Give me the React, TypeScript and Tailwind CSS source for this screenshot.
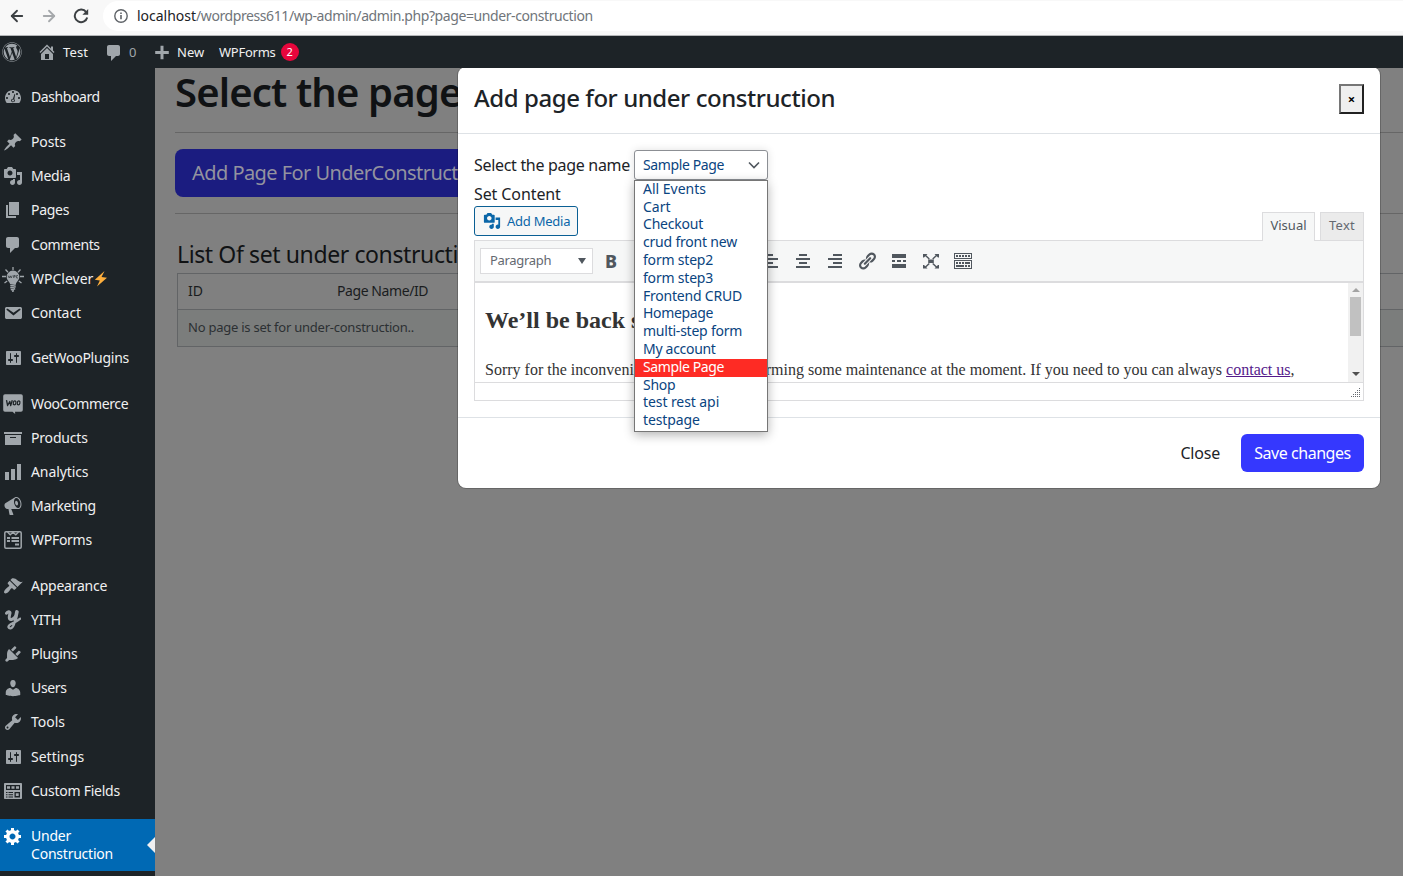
import type { ReactNode } from "react";
import { FaWordpress } from "react-icons/fa";
import { ArrowLeft, ArrowRight, Italic, List, ListOrdered, Quote } from "lucide-react";

const paths = {
  dashboard:
    "M3.76 16h12.48c1.1-1.37 1.76-3.11 1.76-5 0-4.42-3.58-8-8-8s-8 3.58-8 8c0 1.89.66 3.63 1.76 5zM10 4c.55 0 1 .45 1 1s-.45 1-1 1-1-.45-1-1 .45-1 1-1zM6 6c.55 0 1 .45 1 1s-.45 1-1 1-1-.45-1-1 .45-1 1-1zm8 0c.55 0 1 .45 1 1s-.45 1-1 1-1-.45-1-1 .45-1 1-1zm-2.4.8l.6.4-.9 5.1c.4.4.6.8.6 1.3 0 1-.9 1.7-1.9 1.7s-1.9-.8-1.9-1.8.8-1.8 1.8-1.8zM4 10c.55 0 1 .45 1 1s-.45 1-1 1-1-.45-1-1 .45-1 1-1zm12 0c.55 0 1 .45 1 1s-.45 1-1 1-1-.45-1-1 .45-1 1-1zm-5 3.5c0-.55-.45-1-1-1s-1 .45-1 1 .45 1 1 1 1-.45 1-1z",
  post: "M10.44 3.02l1.82-1.82 6.36 6.35-1.83 1.82c-1.05-.68-2.48-.57-3.41.36l-.75.75c-.92.93-1.04 2.35-.35 3.41l-1.83 1.82-2.41-2.41-2.8 2.79c-.42.42-3.38 2.71-3.8 2.29s1.86-3.39 2.28-3.81l2.79-2.79L4.1 9.36l1.83-1.82c1.05.69 2.48.57 3.4-.36l.75-.75c.93-.92 1.05-2.35.36-3.41z",
  media:
    "M13 11V4c0-.55-.45-1-1-1h-1.67L9 1H5L3.67 3H2c-.55 0-1 .45-1 1v7c0 .55.45 1 1 1h10c.55 0 1-.45 1-1zM7 4.5c1.38 0 2.5 1.12 2.5 2.5S8.38 9.5 7 9.5 4.5 8.38 4.5 7 5.62 4.5 7 4.5zM14 6h5v10.5c0 1.38-1.12 2.5-2.5 2.5S14 17.88 14 16.5s1.12-2.5 2.5-2.5c.17 0 .34.02.5.05V9h-3V6zm-4 8.05V13h2v3.5c0 1.38-1.12 2.5-2.5 2.5S7 17.88 7 16.5 8.12 14 9.5 14c.17 0 .34.02.5.05z",
  page: "M6 15V2h10v13H6zm-1 1h8v2H3V5h2v11z",
  comment: "M5 2h9c1.1 0 2 .9 2 2v7c0 1.1-.9 2-2 2h-2l-5 5v-5H5c-1.1 0-2-.9-2-2V4c0-1.1.9-2 2-2z",
  email:
    "M3.87 4h13.25C18.37 4 19 4.59 19 5.79v8.42c0 1.19-.63 1.79-1.88 1.79H3.87c-1.25 0-1.88-.6-1.88-1.79V5.79c0-1.2.63-1.79 1.88-1.79zm6.62 8.6l6.74-5.53c.24-.2.43-.66.13-1.07-.29-.41-.82-.42-1.17-.17l-5.7 3.86L4.8 5.83c-.35-.25-.88-.24-1.17.17-.3.41-.11.87.13 1.07z",
  settings:
    "M18 16V4c0-.55-.45-1-1-1H4c-.55 0-1 .45-1 1v12c0 .55.45 1 1 1h13c.55 0 1-.45 1-1zM8 11h1c.55 0 1 .45 1 1s-.45 1-1 1H8v1.5c0 .28-.22.5-.5.5s-.5-.22-.5-.5V13H6c-.55 0-1-.45-1-1s.45-1 1-1h1V5.5c0-.28.22-.5.5-.5s.5.22.5.5V11zm5-2h-1c-.55 0-1-.45-1-1s.45-1 1-1h1V5.5c0-.28.22-.5.5-.5s.5.22.5.5V7h1c.55 0 1 .45 1 1s-.45 1-1 1h-1v5.5c0 .28-.22.5-.5.5s-.5-.22-.5-.5V9z",
  archive: "M19 4v2H1V4h18zM2 7h16v10H2V7zm11 3V9H7v1h6z",
  chart: "M18 18V2h-4v16h4zm-6 0V7H8v11h4zm-6 0v-8H2v8h4z",
  megaphone:
    "M18.15 5.94c.46 1.62.38 3.22-.02 4.48-.42 1.28-1.26 2.18-2.3 2.48-.16.06-.26.06-.4.06-.06.02-.12.02-.18.02-.06.02-.14.02-.22.02h-6.8l2.22 5.5c.02.14-.06.26-.14.34-.08.1-.24.16-.34.16H6.95c-.1 0-.26-.06-.34-.16-.08-.08-.16-.2-.14-.34l-1-5.5H4.25l-.02-.02c-.5.06-1.08-.18-1.54-.62s-.88-1.08-1.06-1.88c-.24-.8-.2-1.56-.02-2.2.18-.62.58-1.08 1.06-1.3l.02-.02 9-5.4c.1-.06.18-.1.24-.16.06-.04.14-.08.24-.12.16-.08.28-.12.5-.18 1.04-.3 2.24.1 3.22.98s1.84 2.24 2.26 3.86zm-2.58 5.98h-.02c.4-.1.74-.34 1.04-.7.58-.7.86-1.76.86-3.04 0-.64-.1-1.3-.28-1.98-.34-1.36-1.02-2.5-1.78-3.24s-1.68-1.1-2.46-.88c-.82.22-1.4.96-1.7 2-.32 1.04-.28 2.36.06 3.72.38 1.36 1 2.5 1.8 3.24.78.74 1.62 1.1 2.48.88zm-2.54-7.08c.22-.04.42-.02.62.04.38.16.76.48 1.02 1s.42 1.2.42 1.78c0 .3-.04.56-.12.8-.18.48-.44.84-.86.94-.34.1-.8-.06-1.14-.4s-.64-.86-.78-1.5c-.18-.62-.12-1.24.02-1.72s.48-.84.82-.94z",
  appearance:
    "M14.48 11.06L7.41 3.99l1.5-1.5c.5-.56 2.3-.47 3.51.32 1.21.8 1.43 1.28 2.91 2.1 1.18.64 2.45 1.26 4.45.85zm-.71.71L6.7 4.7 4.93 6.47c-.39.39-.39 1.02 0 1.41l1.06 1.06c.39.39.39 1.03 0 1.42-.6.6-1.43 1.11-2.21 1.69-.35.26-.7.53-1.01.84C1.43 14.23.4 16.08 1.4 17.07c.99 1 2.84-.03 4.18-1.36.31-.31.58-.66.85-1.02.57-.78 1.08-1.61 1.69-2.21.39-.39 1.02-.39 1.41 0l1.06 1.06c.39.39 1.02.39 1.41 0z",
  plugins:
    "M13.11 4.36L9.87 7.6 8 5.73l3.24-3.24c.35-.34 1.05-.2 1.56.32.52.51.66 1.21.31 1.55zm-8 1.77l.91-1.12 9.01 9.01-1.19.84c-.71.71-2.63 1.16-3.82 1.16H6.14L4.9 17.26c-.59.59-1.54.59-2.12 0-.59-.58-.59-1.53 0-2.12l1.24-1.24v-3.88c0-1.13.4-3.19 1.09-3.89zm7.26 3.97l3.24-3.24c.34-.35 1.04-.21 1.55.31.52.51.66 1.21.31 1.55l-3.24 3.25z",
  users:
    "M10 9.25c-2.27 0-2.73-3.44-2.73-3.44C7 4.02 7.82 2 9.97 2c2.16 0 2.98 2.02 2.71 3.81 0 0-.41 3.44-2.68 3.44zm0 2.57L12.72 10c2.39 0 4.52 2.33 4.52 4.53v2.49s-3.65 1.13-7.24 1.13c-3.65 0-7.24-1.13-7.24-1.13v-2.49c0-2.25 1.94-4.48 4.47-4.48z",
  tools:
    "M16.68 9.77c-1.34 1.34-3.3 1.67-4.95.99l-5.41 6.52c-.99.99-2.59.99-3.58 0s-.99-2.59 0-3.57l6.52-5.42c-.68-1.65-.35-3.61.99-4.95 1.28-1.28 3.12-1.62 4.72-1.06l-2.89 2.89 2.82 2.82 2.86-2.87c.53 1.58.18 3.39-1.08 4.65zM3.81 16.21c.4.39 1.04.39 1.43 0 .4-.4.4-1.04 0-1.43-.39-.4-1.03-.4-1.43 0-.39.39-.39 1.03 0 1.43z",
  fields:
    "M2 2h16c.55 0 1 .45 1 1v14c0 .55-.45 1-1 1H2c-.55 0-1-.45-1-1V3c0-.55.45-1 1-1zM3 4v5h14V4zM4 5.300h3v2.400H4zm4.500 0h3v2.400h-3zm4.500 0h3v2.400h-3zM3 11v1h1.500v-1zm2.500 0v1H10v-1zM3 13.200v1h1.500v-1zm2.500 0v1H10v-1zM3 15.400v1h1.500v-1zm2.500 0v1H10v-1zM11.500 11v5.400H17V11zm1.300 1.300h2.900v2.800h-2.900z",
  gear: "M18 12h-2.18c-.17.7-.44 1.35-.81 1.93l1.54 1.54-2.1 2.1-1.54-1.54c-.58.36-1.23.63-1.91.79V19H8v-2.18c-.68-.16-1.33-.43-1.91-.79l-1.54 1.54-2.12-2.12 1.54-1.54c-.36-.58-.63-1.23-.79-1.91H1V9.03h2.17c.16-.7.44-1.35.8-1.94L2.43 5.55l2.1-2.1 1.54 1.54c.58-.37 1.24-.64 1.93-.81V2h3v2.18c.68.16 1.33.43 1.91.79l1.54-1.54 2.12 2.12-1.54 1.54c.36.59.64 1.24.8 1.94H18V12zm-8.5 1.5c1.66 0 3-1.34 3-3s-1.34-3-3-3-3 1.34-3 3 1.34 3 3 3z",
  home: "M16 8.5l1.53 1.53-1.06 1.06L10 4.6l-6.47 6.49-1.06-1.06L10 2.5l4 4v-2h2v4zm-6-2.46l6 5.99V18H4v-5.97zM12 17v-5H8v5h4z",
  plus: "M16.800 9v3h-5.300v5.300h-3V12H3.200V9h5.300V3.700h3V9z",
  alignLeft: "M12 5V3H3v2h9zm5 4V7H3v2h14zm-5 4v-2H3v2h9zm5 4v-2H3v2h14z",
  alignCenter: "M14 5V3H6v2h8zm3 4V7H3v2h14zm-3 4v-2H6v2h8zm3 4v-2H3v2h14z",
  alignRight: "M17 5V3H8v2h9zm0 4V7H3v2h14zm0 4v-2H8v2h9zm0 4v-2H3v2h14z",
  link: "M17.74 2.76c1.68 1.69 1.68 4.41 0 6.1l-1.53 1.52c-1.12 1.12-2.7 1.47-4.14 1.09l2.62-2.61.76-.77.76-.76c.84-.84.84-2.2 0-3.04-.84-.85-2.2-.85-3.04 0l-.77.76-3.38 3.38c-.37-1.44-.02-3.02 1.1-4.14l1.52-1.53c1.69-1.68 4.42-1.68 6.1 0zM8.59 13.43l5.34-5.34c.42-.42.42-1.1 0-1.52-.44-.43-1.13-.39-1.53 0l-5.33 5.34c-.42.42-.42 1.1 0 1.52.44.43 1.13.39 1.52 0zm-.76 2.29l4.14-4.15c.38 1.44.03 3.02-1.09 4.14l-1.52 1.53c-1.69 1.68-4.41 1.68-6.1 0-1.68-1.68-1.68-4.42 0-6.1l1.53-1.52c1.12-1.12 2.7-1.47 4.14-1.1l-4.14 4.15c-.85.84-.85 2.2 0 3.05.84.84 2.2.84 3.04 0z",
  more: "M17 7V3H3v4h14zM6 11V9H3v2h3zm6 0V9H8v2h4zm5 0V9h-3v2h3zm0 6v-4H3v4h14z",
  fullscreen:
    "M7.200 8.500h5.600v3.500H7.200zM2 3h4.500L5.300 4.300l3.500 3.200-1 1-3.500-3.300L3 6.500H2zm16 0v3.500h-1l-1.300-1.300-3.500 3.300-1-1 3.500-3.200L13.500 3zM2 17.500V14h1l1.300 1.300L7.800 12l1 1-3.500 3.200 1.200 1.300zm16 0h-4.500l1.200-1.300-3.500-3.200 1-1 3.500 3.300L17 14h1z",
  kitchenSink:
    "M19 2v6H1V2h18zm-1 5V3H2v4h16zM5 4v2H3V4h2zm3 0v2H6V4h2zm3 0v2H9V4h2zm3 0v2h-2V4h2zm3 0v2h-2V4h2zm2 5v9H1V9h18zm-1 8v-7H2v7h16zM5 11v2H3v-2h2zm3 0v2H6v-2h2zm3 0v2H9v-2h2zm6 0v2h-5v-2h5zm-6 3v2H3v-2h8zm3 0v2h-2v-2h2zm3 0v2h-2v-2h2z",
};

type IconName = keyof typeof paths;

function Icon({ name, className = "size-5" }: { name: IconName; className?: string }) {
  return (
    <svg viewBox="0 0 20 20" className={`shrink-0 ${className}`} fill="currentColor" fillRule="evenodd">
      <path d={paths[name]} />
    </svg>
  );
}

function BulbIcon() {
  return (
    <svg viewBox="0 0 24 26" className="h-[26px] w-6 shrink-0" fill="none" stroke="currentColor">
      <path d="M12 1v3M4.500 3.500l2.500 2.700M19.500 3.500 17 6.200M1 10.500h4M19 10.500h4M3.500 17l2.700-2M20.500 17l-2.700-2" strokeWidth="1.300" />
      <path d="M12 4.500a6.300 6.300 0 0 0-6.300 6.500c0 3.500 3 4.500 3.400 7.300h5.800c.4-2.800 3.400-3.800 3.400-7.300A6.300 6.300 0 0 0 12 4.500z" fill="currentColor" stroke="none" />
      <path d="M7 9.500l1.200 2.500 1-2.200 1 2.200 1-2.500M12.700 12V9.500h1.500v1.300h-1.500M17 9.500h-1.400V12H17" stroke="#1d2327" strokeWidth=".6" />
      <path d="M9.300 19.700l5.400-1M9.300 21.700l5.400-1M9.800 23.700l4.400-1M11 25.200l2-.5" strokeWidth="1.400" />
    </svg>
  );
}

function WooIcon() {
  return (
    <svg viewBox="0 0 20 20" className="size-5 shrink-0">
      <path d="M2 .2h16A1.800 1.800 0 0 1 19.800 2v14a1.800 1.800 0 0 1-1.800 1.800h-6l.2 2.200-2.700-2.200H2A1.800 1.800 0 0 1 .2 16V2A1.800 1.800 0 0 1 2 .2z" fill="currentColor" />
      <path d="M3.500 6.200l1.100 5.300 2.200-4 .9 4 1.600-5.300" fill="none" stroke="#1d2327" strokeWidth="1.300" strokeLinejoin="round" />
      <ellipse cx="11.600" cy="8.800" rx="1.300" ry="2" fill="none" stroke="#1d2327" strokeWidth="1.200" transform="rotate(12 11.600 8.800)" />
      <ellipse cx="15.600" cy="8.800" rx="1.300" ry="2" fill="none" stroke="#1d2327" strokeWidth="1.200" transform="rotate(12 15.600 8.800)" />
    </svg>
  );
}

function FormIcon() {
  return (
    <svg viewBox="0 0 18 18" className="size-[18px] shrink-0" fill="none" stroke="currentColor">
      <rect x=".8" y=".8" width="16.400" height="16.400" rx="1.200" strokeWidth="1.500" />
      <path d="M3.500 1l2.700 2.700L9 1.200l2.800 2.500L14.500 1" strokeWidth="1.400" />
      <path d="M3 7h3M7.500 7H15M3 10h3M7.500 10H15M11 13.500h4" strokeWidth="1.800" />
    </svg>
  );
}

function YithIcon() {
  return (
    <svg viewBox="0 0 16 20" className="h-5 w-4 shrink-0" fill="none" stroke="currentColor" strokeLinecap="round" strokeLinejoin="round">
      <path d="M1.500 3.200C2.500 1.500 5.200 1.200 5 3c-.2 1.700-1.500 4.500-.3 6 1.100 1.300 4-.2 5.600-2.500" strokeWidth="3" />
      <path d="M12 1.800c-.7 4-1.300 7.700-2.600 11.400-.9 3-2.100 5-3.900 5.200-2 .2-2.700-1.700-1.200-3.100 2-1.900 7.200-3.300 11-6.600" strokeWidth="2.300" />
      <path d="M11.900 1.900l-1.700 8" strokeWidth="3.600" />
    </svg>
  );
}

function Bolt() {
  return (
    <svg viewBox="0 0 14 16" className="ml-px h-4 w-3.5 shrink-0">
      <path d="M10.500 0 .8 8.800l5 .7L3 15.500 13 6.800l-5.500-.8z" fill="#fdae3c" />
    </svg>
  );
}

function MenuItem({ icon, label, tracking = "", extra }: { icon: ReactNode; label: string; tracking?: string; extra?: ReactNode }) {
  return (
    <li className="flex h-[34.2px] items-center">
      <span className="flex w-[31px] shrink-0 items-center text-[#a0a6ab]">
        <span className="flex w-[26px] justify-center">{icon}</span>
      </span>
      <span className={tracking}>{label}</span>
      {extra}
    </li>
  );
}

function Gap() {
  return <li className="h-[11.1px]" />;
}

function Sidebar() {
  return (
    <aside className="relative w-[155px] shrink-0 bg-[#1d2327] text-sm text-[#f0f0f1]">
      <ul className="pt-[11.7px]">
        <MenuItem icon={<Icon name="dashboard" />} label="Dashboard" tracking="tracking-[-0.42px]" />
        <Gap />
        <MenuItem icon={<Icon name="post" />} label="Posts" tracking="tracking-[-0.1px]" />
        <MenuItem icon={<Icon name="media" />} label="Media" tracking="tracking-[-0.25px]" />
        <MenuItem icon={<Icon name="page" />} label="Pages" tracking="tracking-[-0.3px]" />
        <MenuItem icon={<Icon name="comment" />} label="Comments" tracking="tracking-[-0.4px]" />
        <MenuItem icon={<BulbIcon />} label="WPClever" extra={<Bolt />} />
        <MenuItem icon={<Icon name="email" />} label="Contact" tracking="tracking-[-0.1px]" />
        <Gap />
        <MenuItem icon={<Icon name="settings" />} label="GetWooPlugins" tracking="tracking-[-0.24px]" />
        <Gap />
        <MenuItem icon={<WooIcon />} label="WooCommerce" tracking="tracking-[-0.36px]" />
        <MenuItem icon={<Icon name="archive" />} label="Products" tracking="tracking-[-0.18px]" />
        <MenuItem icon={<Icon name="chart" />} label="Analytics" tracking="tracking-[-0.1px]" />
        <MenuItem icon={<Icon name="megaphone" />} label="Marketing" tracking="tracking-[-0.3px]" />
        <MenuItem icon={<FormIcon />} label="WPForms" tracking="tracking-[-0.28px]" />
        <Gap />
        <MenuItem icon={<Icon name="appearance" />} label="Appearance" tracking="tracking-[-0.25px]" />
        <MenuItem icon={<YithIcon />} label="YITH" tracking="tracking-[-0.2px]" />
        <MenuItem icon={<Icon name="plugins" />} label="Plugins" tracking="tracking-[-0.28px]" />
        <MenuItem icon={<Icon name="users" />} label="Users" tracking="tracking-[-0.35px]" />
        <MenuItem icon={<Icon name="tools" />} label="Tools" />
        <MenuItem icon={<Icon name="settings" />} label="Settings" />
        <MenuItem icon={<Icon name="fields" />} label="Custom Fields" tracking="tracking-[-0.25px]" />
        <Gap />
        <li className="relative flex h-[52px] bg-[#0069b4] pt-2 leading-[18px] text-white">
          <span className="flex w-[31px] shrink-0 pl-[3px]">
            <Icon name="gear" className="-mt-px size-5" />
          </span>
          <span className="tracking-[-0.22px]">
            Under
            <br />
            Construction
          </span>
          <span className="absolute top-[18px] right-0 border-y-8 border-r-8 border-y-transparent border-r-[#f0f0f1]" />
        </li>
      </ul>
    </aside>
  );
}

function BrowserBar() {
  return (
    <div className="flex h-9 shrink-0 items-center border-b border-[#b4b6b8] bg-[#f8f8f8] pb-[3px] pl-2">
      <ArrowLeft className="size-[18px] text-[#3c4043]" strokeWidth={2.4} />
      <ArrowRight className="ml-[14px] size-[18px] text-[#a5a8ab]" strokeWidth={2.4} />
      <svg viewBox="0 0 16 16" className="ml-[15px] size-4 text-[#3c4043]" fill="none" stroke="currentColor" strokeWidth="2">
        <path d="M13.200 4.200A6.300 6.300 0 1 0 14.200 9.500" />
        <path d="M15.200 1v5.800H9.400z" fill="currentColor" stroke="none" />
      </svg>
      <div className="ml-[14px] flex h-[30px] flex-1 items-center rounded-l-full bg-white pl-[11px] text-sm text-[#70757a]">
        <svg viewBox="0 0 14 14" className="mr-[9px] size-[14px] text-[#5f6368]" fill="none" stroke="currentColor" strokeWidth="1.400">
          <circle cx="7" cy="7" r="6.200" />
          <path d="M7 6v4.300M7 3.500v1.500" strokeWidth="1.600" />
        </svg>
        <span className="tracking-[-0.02px] text-[#202124]">localhost</span>
        <span className="tracking-[-0.41px]">/wordpress611/wp-admin/admin.php?page=under-construction</span>
      </div>
    </div>
  );
}

function AdminBar() {
  return (
    <div className="z-10 flex h-8 shrink-0 items-center bg-[#1d2327] text-[13px] text-[#f0f0f1]">
      <FaWordpress className="ml-0.5 size-5 text-[#a0a6ab]" />
      <Icon name="home" className="ml-[15px] size-5 text-[#a0a6ab]" />
      <span className="ml-[6px] w-[41px] pt-0.5 tracking-[0.15px]">Test</span>
      <Icon name="comment" className="mt-px size-5 text-[#a0a6ab]" />
      <span className="ml-[5px] w-[23px] pt-0.5 text-[#a0a6ab]">0</span>
      <Icon name="plus" className="size-5 text-[#a0a6ab]" />
      <span className="ml-[5px] w-[42px] pt-0.5">New</span>
      <span className="pt-0.5 tracking-[-0.25px]">WPForms</span>
      <span className="ml-[5px] flex size-[18px] items-center justify-center rounded-full bg-[#e8063c] text-[11px] text-white">2</span>
    </div>
  );
}

function PageContent() {
  return (
    <main className="flex-1 overflow-hidden bg-[#808080] pl-5 whitespace-nowrap text-[#101214]">
      <h1 className="h-[64px] text-[40px] leading-[47px] font-semibold tracking-[-0.85px]">Select the page</h1>
      <div className="flex h-[82px] items-center border-y border-[#666]">
        <button className="h-12 rounded-lg bg-[#1b1c80] px-[17px] text-xl tracking-[-0.55px] text-[#93939f]">Add Page For UnderConstruction</button>
      </div>
      <div className="pt-[23px] pl-[2px]">
        <h2 className="h-9 text-[23px] leading-[34px] tracking-[-0.39px]">List Of set under construction</h2>
        <div className="border border-r-0 border-[#626466] text-sm text-[#1a1c1e]">
          <div className="flex h-9 items-center border-b border-[#626466] pb-0.5 pl-[10px]">
            <span className="w-[149px]">ID</span>
            <span className="tracking-[-0.42px]">Page Name/ID</span>
          </div>
          <div className="flex h-9 items-center bg-[#7b7d7c] pb-0.5 pl-[10px] text-[13px] tracking-[-0.24px] text-[#2c3033]">
            No page is set for under-construction..
          </div>
        </div>
      </div>
    </main>
  );
}

const pages: [string, string][] = [
  ["All Events", ""],
  ["Cart", ""],
  ["Checkout", "tracking-[-0.2px]"],
  ["crud front new", "tracking-[-0.2px]"],
  ["form step2", "tracking-[-0.2px]"],
  ["form step3", "tracking-[-0.2px]"],
  ["Frontend CRUD", "tracking-[-0.22px]"],
  ["Homepage", "tracking-[-0.35px]"],
  ["multi-step form", "tracking-[-0.23px]"],
  ["My account", "tracking-[-0.3px]"],
  ["Sample Page", "tracking-[-0.38px]"],
  ["Shop", "tracking-[-0.3px]"],
  ["test rest api", "tracking-[-0.08px]"],
  ["testpage", "tracking-[-0.12px]"],
];

function PageSelect() {
  return (
    <div className="relative ml-1 h-[30px] w-[134px] text-sm text-[#0a4480]">
      <div className="flex h-full items-center rounded-[3px] border border-[#8c8f94] bg-white pl-2 tracking-[-0.38px] shadow-[0_0_8px_rgba(0,0,0,0.12)]">
        Sample Page
        <svg viewBox="0 0 12 8" className="ml-[24px] h-2 w-3" fill="none" stroke="#50575e" strokeWidth="1.600">
          <path d="M1 1.500l5 5 5-5" />
        </svg>
      </div>
      <ul className="absolute top-[30px] left-0 z-20 flex h-[252px] w-[134px] flex-col border border-[#767676] bg-white shadow-[0_3px_10px_rgba(0,0,0,0.3)]">
        {pages.map(([name, tracking]) => (
          <li
            key={name}
            className={`flex h-[17.8px] items-center pb-[2px] pl-2 leading-none ${tracking} ${name === "Sample Page" ? "bg-[#fe2b24] text-white" : ""}`}
          >
            {name}
          </li>
        ))}
      </ul>
    </div>
  );
}

function Tool({ children }: { children: ReactNode }) {
  return <span className="flex w-8 justify-center">{children}</span>;
}

function Editor() {
  return (
    <div>
      <div className="flex h-[34px] items-end justify-between">
        <button className="mb-1 flex h-[30px] w-[104px] items-center rounded-[3px] border border-[#0a5f94] bg-[#f6f7f7] pl-2 text-[13px] text-[#0a66a8]">
          <Icon name="media" className="mr-[6px] size-[18px]" />
          <span className="pt-px tracking-[-0.25px]">Add Media</span>
        </button>
        <div className="flex items-end text-[13px] text-[#646970]">
          <span className="z-10 -mb-px flex h-[29px] w-[53px] justify-center border border-b-0 border-[#dcdcde] bg-[#f6f7f7] pt-[3px] text-[#50575e]">Visual</span>
          <span className="ml-[5px] flex h-7 w-11 justify-center border border-b-0 border-[#dcdcde] bg-[#ebebeb] pt-[3px] tracking-[0.3px]">Text</span>
        </div>
      </div>
      <div className="border border-[#dcdcde]">
        <div className="flex h-[42px] items-center border-b-2 border-[#dcdcde] bg-[#f6f7f7] pl-[5px] text-[#50575e]">
          <div className="mr-[2px] flex h-[26px] w-[113px] items-center justify-between border border-[#dcdcde] bg-white pr-[6px] pl-[9px] text-[13px] text-[#646970]">
            <span className="tracking-[-0.3px]">Paragraph</span>
            <span className="border-x-[4px] border-t-[6px] border-x-transparent border-t-[#50575e]" />
          </div>
          <Tool><span className="text-lg leading-none font-extrabold">B</span></Tool>
          <Tool><Italic className="size-4" /></Tool>
          <Tool><List className="size-4" /></Tool>
          <Tool><ListOrdered className="size-4" /></Tool>
          <Tool><Quote className="size-4" /></Tool>
          <Tool><Icon name="alignLeft" /></Tool>
          <Tool><Icon name="alignCenter" /></Tool>
          <Tool><Icon name="alignRight" /></Tool>
          <Tool><Icon name="link" /></Tool>
          <Tool><Icon name="more" /></Tool>
          <Tool><Icon name="fullscreen" /></Tool>
          <Tool><Icon name="kitchenSink" /></Tool>
        </div>
        <div className="flex h-[99px]">
          <div className="flex-1 overflow-hidden pl-[10px] font-['Liberation_Serif',serif] whitespace-nowrap text-[#333]">
            <h2 className="mt-[23px] text-2xl leading-[28px] font-bold">We’ll be back soon!</h2>
            <p className="mt-[24px] text-base leading-6">
              Sorry for the inconvenience but we’re performing some maintenance at the moment. If you need to you can always{" "}
              <a className="text-[#551a8b] underline">contact us</a>,
            </p>
          </div>
          <div className="flex w-[15px] flex-col items-center bg-[#f1f1f1] pt-[5px] pb-[6px]">
            <span className="border-x-4 border-b-4 border-x-transparent border-b-[#a3a3a3]" />
            <span className="mt-[5px] h-[39px] w-[11px] bg-[#c1c1c1]" />
            <span className="mt-auto border-x-4 border-t-4 border-x-transparent border-t-[#505050]" />
          </div>
        </div>
        <div className="flex h-[18px] items-end justify-end border-t border-[#dcdcde] pr-0.5 pb-0.5">
          <svg viewBox="0 0 10 10" className="size-[10px]" fill="#646970">
            {[0, 1, 2, 3, 4].flatMap((row) =>
              [0, 1, 2, 3, 4].filter((col) => col >= 4 - row).map((col) => <rect key={`${row}-${col}`} x={col * 2} y={row * 2} width="1" height="1" />),
            )}
          </svg>
        </div>
      </div>
    </div>
  );
}

function Modal() {
  return (
    <section className="absolute top-[67px] left-[458px] h-[421px] w-[922px] rounded-lg bg-white text-[#1d2327] shadow-[0_0_0_1px_rgba(0,0,0,0.2)]">
      <header className="flex h-[67px] items-center justify-between border-b border-[#dee2e6] pr-4 pb-[3px] pl-4">
        <h2 className="pb-0.5 text-2xl font-medium tracking-[-0.44px]">Add page for under construction</h2>
        <button className="h-[30px] w-[25px] border-2 border-t-[#767676] border-r-[#212121] border-b-[#212121] border-l-[#767676] bg-[#efefef] pt-0.5 text-[13px] leading-none font-bold text-black">
          ×
        </button>
      </header>
      <div className="px-4 pt-4">
        <div className="flex h-[30px] items-center whitespace-nowrap">
          <span className="w-[156px] tracking-[-0.31px]">Select the page name</span>
          <PageSelect />
        </div>
        <div className="h-[26px] leading-[28px] tracking-[-0.1px]">Set Content</div>
        <Editor />
      </div>
      <footer className="mt-4 flex items-center justify-end border-t border-[#dee2e6] pt-4 pr-4">
        <button className="mr-[21px] tracking-[-0.2px]">Close</button>
        <button className="h-[38px] w-[123px] rounded-md bg-[#3538fe] tracking-[-0.46px] text-white">Save changes</button>
      </footer>
    </section>
  );
}

export default function App() {
  return (
    <div className="relative flex h-[876px] w-[1403px] flex-col overflow-hidden font-['Noto_Sans',sans-serif]">
      <BrowserBar />
      <AdminBar />
      <div className="flex min-h-0 flex-1">
        <Sidebar />
        <PageContent />
      </div>
      <Modal />
    </div>
  );
}
